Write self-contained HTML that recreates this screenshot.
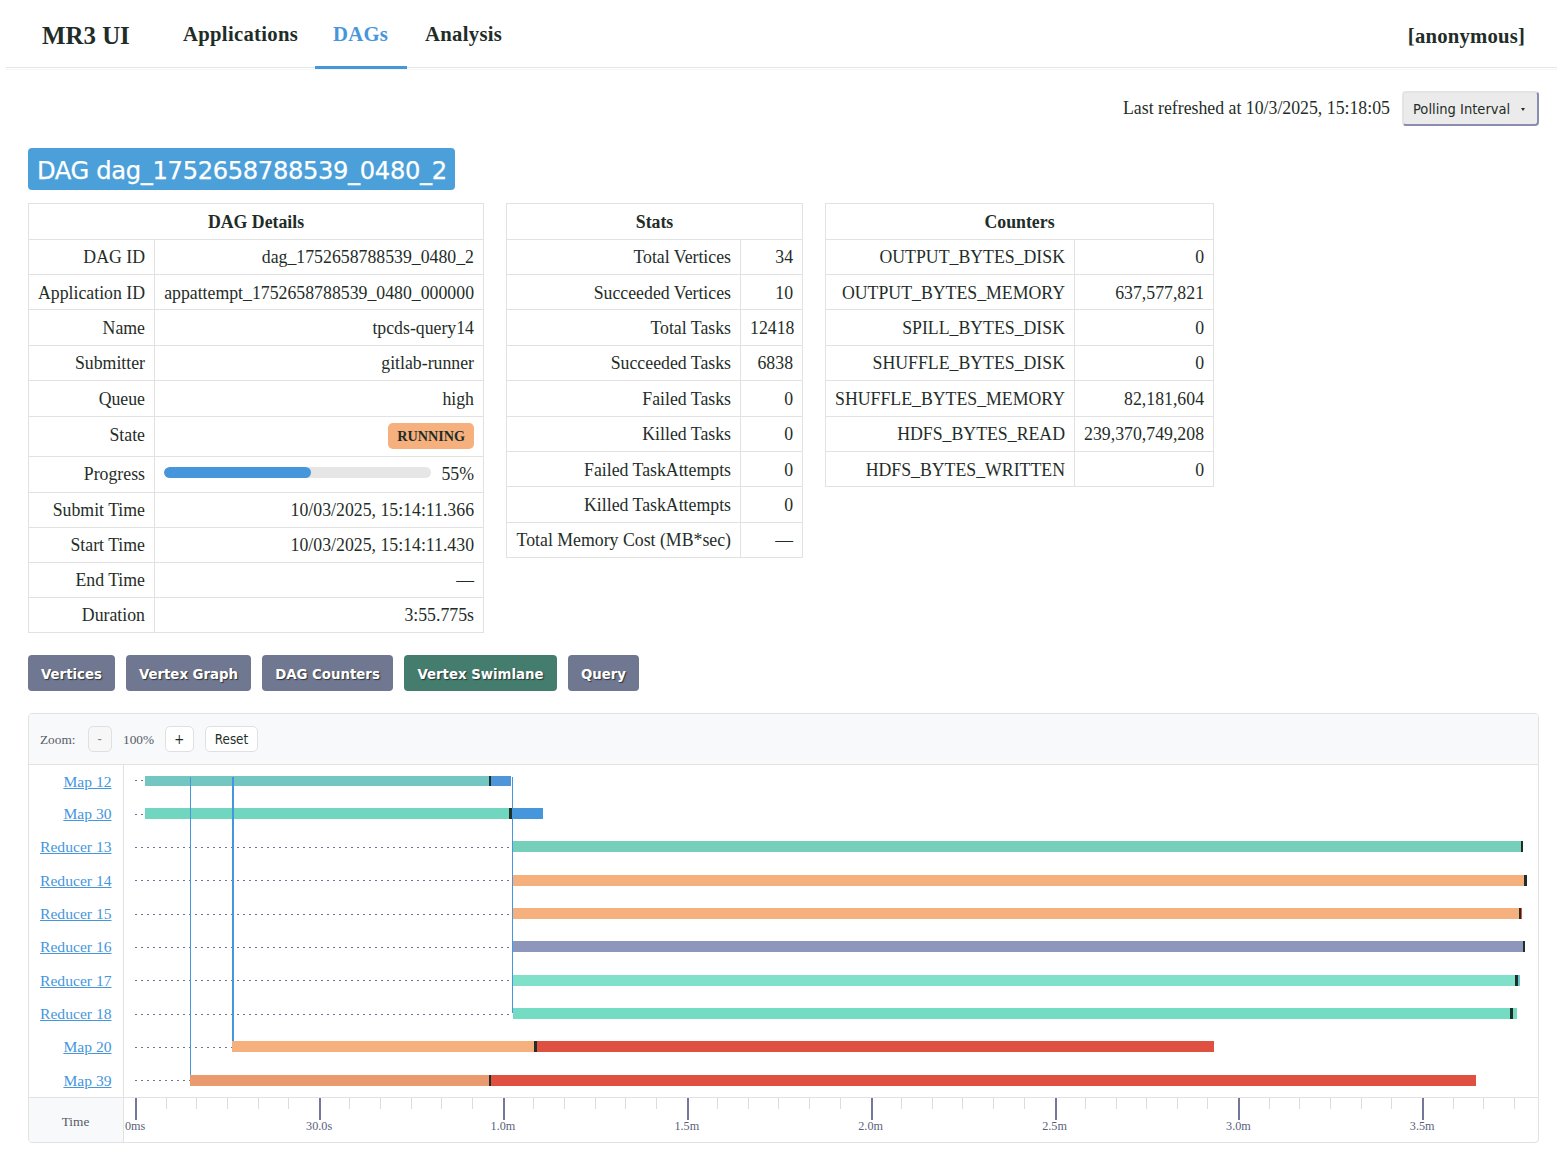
<!DOCTYPE html>
<html lang="en">
<head>
<meta charset="utf-8">
<title>MR3 UI</title>
<style>
html,body{margin:0;padding:0;background:#fff;}
body{width:1557px;height:1163px;position:relative;overflow:hidden;font-family:"Liberation Serif","Times New Roman",serif;font-size:17.78px;color:#1f2d28;}
a{color:#4696dc;}
.abs{position:absolute;}
/* header */
#hdr{left:6px;top:0;width:1551px;height:67px;border-bottom:1px solid #e3e6ea;}
#brand{left:42px;top:21.3px;font-weight:bold;font-size:24.9px;line-height:30px;white-space:nowrap;}
.nav{top:21px;font-weight:bold;font-size:20.7px;letter-spacing:0.3px;line-height:26px;white-space:nowrap;}
#hshadow{left:6px;top:69px;width:1551px;height:1px;background:#f5f6f6;}
#uline{left:315px;top:66px;width:92px;height:3px;background:#4696dc;}
/* refresh */
#refreshed{left:1123px;top:97px;line-height:22px;white-space:nowrap;}
#poll{left:1402px;top:91px;width:137px;height:35px;box-sizing:border-box;background:#ebebeb;border:2px solid;border-color:#e4e4e4 #8a8db0 #8a8db0 #e4e4e4;border-radius:4px;font-family:"DejaVu Sans Condensed","Liberation Sans",sans-serif;font-size:14.55px;line-height:32px;padding-left:9px;white-space:nowrap;}
#caret{left:1520.5px;top:108px;width:0;height:0;border-left:2.5px solid transparent;border-right:2.5px solid transparent;border-top:3px solid #1f2d28;}
/* title */
#title{left:28px;top:148px;width:427px;height:42px;box-sizing:border-box;background:#4ca0da;border-radius:4px;color:#fff;font-family:"DejaVu Sans","Liberation Sans",sans-serif;font-size:24.2px;letter-spacing:-0.35px;-webkit-text-stroke:0.25px #fff;line-height:38px;padding-top:4px;padding-left:9px;white-space:nowrap;}
/* tables */
table.kv{border-collapse:collapse;position:absolute;table-layout:fixed;}
table.kv td,table.kv th{border:1px solid #e2e2e2;height:35.35px;padding:1px 9px 0 9px;box-sizing:border-box;text-align:right;white-space:nowrap;line-height:20px;}
table.kv th{text-align:center;font-weight:bold;}
table.kv tr.state td{height:40.9px;padding-top:0;padding-bottom:3.4px;}
table.kv tr.state td+td{padding-top:2px;padding-bottom:0;}
table.kv tr.state ~ tr td{height:35.15px;padding-top:0;}
.badge{display:inline-block;background:#f5b07d;border-radius:5px;font-weight:bold;font-size:14.2px;line-height:26px;height:26px;padding:0 9px;vertical-align:middle;position:relative;top:-1px;}
.prog{display:flex;align-items:center;justify-content:flex-end;}
.track{width:268px;height:10.5px;border-radius:6px;background:#e6e6e6;margin-right:10px;overflow:hidden;position:relative;top:-2px;}
.fill{width:147px;height:10.5px;border-radius:6px;background:#4696dc;}
/* tabs */
.tab{top:655px;height:36px;background:#707791;border-radius:4px;color:#fff;font-family:"DejaVu Sans Condensed","Liberation Sans",sans-serif;font-weight:bold;font-size:14.8px;line-height:38px;text-align:center;white-space:nowrap;text-shadow:1px 1px 1px rgba(20,30,30,.75);}
.tab.on{background:#447d6e;}
/* swimlane */
#swim{position:absolute;left:28px;top:713px;width:1511px;height:430px;box-sizing:border-box;border:1px solid #e2e2e2;border-radius:4px;overflow:hidden;}
#swim>*{position:absolute;}
#swhead{left:-1px;top:-1px;width:1511px;height:51px;background:#f8f9fa;border-bottom:1px solid #e2e2e2;}
#swhead>*{position:absolute;}
.zl{top:18px;font-size:13.3px;line-height:18px;color:#565b66;}
.zb{top:12.5px;height:26px;box-sizing:border-box;border:1px solid #e0e0e0;border-radius:5px;background:#fff;font-family:"DejaVu Sans Condensed","Liberation Sans",sans-serif;font-size:13.3px;line-height:25px;text-align:center;color:#1f2d28;}
.zb.dis{background:#f7f7f7;color:#888;}
#lcol{left:-1px;top:51px;width:95px;height:380px;border-right:1px solid #e2e2e2;}
#axl{left:-1px;top:383px;width:95px;height:47px;background:#f8f9fa;border-top:1px solid #e2e2e2;border-right:1px solid #e2e2e2;text-align:center;font-size:13.3px;line-height:47px;color:#565b66;}
#axline{left:95px;top:383px;width:1415px;height:0;border-top:1px solid #e2e2e2;}
.vl{right:1426.5px;font-size:15.6px;line-height:22px;white-space:nowrap;color:#4696dc;text-decoration:underline;}
.lead{height:1px;background:repeating-linear-gradient(to right,#6e7192 0,#6e7192 2px,transparent 2px,transparent 6px);}
.bar{height:10px;}
.vc{background:#4696dc;}
.tk{top:384px;width:1px;height:11px;background:#dcdce0;}
.tk.mj{width:2px;height:22px;background:#74779a;}
.tl{top:405px;width:60px;text-align:center;font-size:12.2px;line-height:14px;color:#5b5f7c;}
</style>
</head>
<body>
<div id="hdr" class="abs"></div>
<div id="hshadow" class="abs"></div>
<div id="brand" class="abs">MR3 UI</div>
<div class="abs nav" style="left:183px">Applications</div>
<div class="abs nav" style="left:333px;color:#4696dc">DAGs</div>
<div class="abs nav" style="left:425px">Analysis</div>
<div class="abs nav" style="right:32px;top:23px;letter-spacing:0.2px">[anonymous]</div>
<div id="uline" class="abs"></div>

<div id="refreshed" class="abs">Last refreshed at 10/3/2025, 15:18:05</div>
<div id="poll" class="abs">Polling Interval</div>
<div id="caret" class="abs"></div>

<div id="title" class="abs">DAG dag_1752658788539_0480_2</div>

<table class="kv" style="left:28px;top:203.45px;width:455px">
<colgroup><col style="width:126px"><col style="width:329px"></colgroup>
<tr><th colspan="2">DAG Details</th></tr>
<tr><td>DAG ID</td><td>dag_1752658788539_0480_2</td></tr>
<tr><td>Application ID</td><td>appattempt_1752658788539_0480_000000</td></tr>
<tr><td>Name</td><td>tpcds-query14</td></tr>
<tr><td>Submitter</td><td>gitlab-runner</td></tr>
<tr><td>Queue</td><td>high</td></tr>
<tr class="state"><td>State</td><td><span class="badge">RUNNING</span></td></tr>
<tr><td>Progress</td><td><div class="prog"><div class="track"><div class="fill"></div></div><span class="pct">55%</span></div></td></tr>
<tr><td>Submit Time</td><td>10/03/2025, 15:14:11.366</td></tr>
<tr><td>Start Time</td><td>10/03/2025, 15:14:11.430</td></tr>
<tr><td>End Time</td><td>&mdash;</td></tr>
<tr><td>Duration</td><td>3:55.775s</td></tr>
</table>

<table class="kv" style="left:506px;top:203.45px;width:296px">
<colgroup><col style="width:234px"><col style="width:62px"></colgroup>
<tr><th colspan="2">Stats</th></tr>
<tr><td>Total Vertices</td><td>34</td></tr>
<tr><td>Succeeded Vertices</td><td>10</td></tr>
<tr><td>Total Tasks</td><td>12418</td></tr>
<tr><td>Succeeded Tasks</td><td>6838</td></tr>
<tr><td>Failed Tasks</td><td>0</td></tr>
<tr><td>Killed Tasks</td><td>0</td></tr>
<tr><td>Failed TaskAttempts</td><td>0</td></tr>
<tr><td>Killed TaskAttempts</td><td>0</td></tr>
<tr><td>Total Memory Cost (MB*sec)</td><td>&mdash;</td></tr>
</table>

<table class="kv" style="left:825px;top:203.45px;width:388px">
<colgroup><col style="width:249px"><col style="width:139px"></colgroup>
<tr><th colspan="2">Counters</th></tr>
<tr><td>OUTPUT_BYTES_DISK</td><td>0</td></tr>
<tr><td>OUTPUT_BYTES_MEMORY</td><td>637,577,821</td></tr>
<tr><td>SPILL_BYTES_DISK</td><td>0</td></tr>
<tr><td>SHUFFLE_BYTES_DISK</td><td>0</td></tr>
<tr><td>SHUFFLE_BYTES_MEMORY</td><td>82,181,604</td></tr>
<tr><td>HDFS_BYTES_READ</td><td>239,370,749,208</td></tr>
<tr><td>HDFS_BYTES_WRITTEN</td><td>0</td></tr>
</table>

<div class="abs tab" style="left:28px;width:87px">Vertices</div>
<div class="abs tab" style="left:126px;width:125px">Vertex Graph</div>
<div class="abs tab" style="left:262px;width:131px">DAG Counters</div>
<div class="abs tab on" style="left:404px;width:153px">Vertex Swimlane</div>
<div class="abs tab" style="left:568px;width:71px">Query</div>

<div id="swim">
<div id="swhead"><span class="zl" style="left:12px">Zoom:</span><span class="zb dis" style="left:60px;width:23.5px">-</span><span class="zl" style="left:95px">100%</span><span class="zb" style="left:137px;width:28.5px">+</span><span class="zb" style="left:177px;width:53px">Reset</span></div>
<div id="lcol"></div>
<div id="axl">Time</div>
<div id="axline"></div>
<a class="vl" href="#" style="top:56.7px">Map 12</a>
<div class="lead" style="top:66px;left:106px;width:10.0px"></div>
<div class="bar" style="top:62px;height:10px;left:116.0px;width:344.0px;background:#74c6c2"></div>
<div class="bar" style="top:62px;height:10px;left:460.0px;width:2.0px;background:#1f3028"></div>
<div class="bar" style="top:62px;height:10px;left:462.0px;width:20.0px;background:#4f96d8"></div>
<a class="vl" href="#" style="top:89.2px">Map 30</a>
<div class="lead" style="top:100px;left:106px;width:10.0px"></div>
<div class="bar" style="top:94px;height:11px;left:116.0px;width:364.0px;background:#70d6bf"></div>
<div class="bar" style="top:94px;height:11px;left:480.0px;width:3.0px;background:#1f3028"></div>
<div class="bar" style="top:94px;height:11px;left:483.0px;width:31.0px;background:#4696dc"></div>
<a class="vl" href="#" style="top:122.2px">Reducer 13</a>
<div class="lead" style="top:133px;left:106px;width:378.0px"></div>
<div class="bar" style="top:127px;height:11px;left:484.0px;width:1008.2px;background:#76cfbb"></div>
<div class="bar" style="top:127px;height:11px;left:1492.2px;width:1.8px;background:#1f3028"></div>
<a class="vl" href="#" style="top:156.2px">Reducer 14</a>
<div class="lead" style="top:166px;left:106px;width:378.0px"></div>
<div class="bar" style="top:161px;height:11px;left:484.0px;width:1010.5px;background:#f5b07d"></div>
<div class="bar" style="top:161px;height:11px;left:1494.5px;width:3.5px;background:#1f3028"></div>
<a class="vl" href="#" style="top:189.2px">Reducer 15</a>
<div class="lead" style="top:200px;left:106px;width:378.0px"></div>
<div class="bar" style="top:194px;height:11px;left:484.0px;width:1006.0px;background:#f5b07d"></div>
<div class="bar" style="top:194px;height:11px;left:1490.0px;width:1.5px;background:#1f3028"></div>
<div class="bar" style="top:194px;height:11px;left:1491.5px;width:1.3px;background:#e05040"></div>
<a class="vl" href="#" style="top:222.2px">Reducer 16</a>
<div class="lead" style="top:233px;left:106px;width:378.0px"></div>
<div class="bar" style="top:227px;height:11px;left:484.0px;width:1009.6px;background:#8e97bb"></div>
<div class="bar" style="top:227px;height:11px;left:1493.6px;width:2.1px;background:#1f3028"></div>
<a class="vl" href="#" style="top:255.9px">Reducer 17</a>
<div class="lead" style="top:266px;left:106px;width:378.0px"></div>
<div class="bar" style="top:261px;height:10.5px;left:484.0px;width:1001.7px;background:#80e0ca"></div>
<div class="bar" style="top:261px;height:10.5px;left:1485.7px;width:3.3px;background:#1f3028"></div>
<div class="bar" style="top:261px;height:10.5px;left:1489.0px;width:2.0px;background:#6cc6d0"></div>
<a class="vl" href="#" style="top:289.2px">Reducer 18</a>
<div class="lead" style="top:300px;left:106px;width:378.0px"></div>
<div class="bar" style="top:294px;height:11px;left:484.0px;width:996.7px;background:#73dcc3"></div>
<div class="bar" style="top:294px;height:11px;left:1480.7px;width:3.3px;background:#1f3028"></div>
<div class="bar" style="top:294px;height:11px;left:1484.0px;width:3.8px;background:#73dcc3"></div>
<a class="vl" href="#" style="top:321.9px">Map 20</a>
<div class="lead" style="top:333px;left:106px;width:97.0px"></div>
<div class="bar" style="top:327px;height:10.5px;left:203.0px;width:302.0px;background:#f5b07d"></div>
<div class="bar" style="top:327px;height:10.5px;left:505.0px;width:2.5px;background:#1f3028"></div>
<div class="bar" style="top:327px;height:10.5px;left:507.5px;width:677.5px;background:#e05040"></div>
<a class="vl" href="#" style="top:356.0px">Map 39</a>
<div class="lead" style="top:366px;left:106px;width:55.0px"></div>
<div class="bar" style="top:361px;height:10.7px;left:161.0px;width:299.0px;background:#ea9a6e"></div>
<div class="bar" style="top:361px;height:10.7px;left:460.0px;width:2.0px;background:#1f3028"></div>
<div class="bar" style="top:361px;height:10.7px;left:462.0px;width:985.0px;background:#e05040"></div>
<div class="vc" style="left:161px;top:63px;width:1px;height:298px"></div>
<div class="vc" style="left:203px;top:63px;width:2px;height:264px"></div>
<div class="vc" style="left:483px;top:63px;width:1px;height:236px"></div>
<div class="tk mj" style="left:106.2px"></div>
<div class="tl" style="left:76.2px">0ms</div>
<div class="tk" style="left:136.5px"></div>
<div class="tk" style="left:167.2px"></div>
<div class="tk" style="left:197.8px"></div>
<div class="tk" style="left:228.5px"></div>
<div class="tk" style="left:259.1px"></div>
<div class="tk mj" style="left:290.1px"></div>
<div class="tl" style="left:260.1px">30.0s</div>
<div class="tk" style="left:320.4px"></div>
<div class="tk" style="left:351.0px"></div>
<div class="tk" style="left:381.7px"></div>
<div class="tk" style="left:412.3px"></div>
<div class="tk" style="left:443.0px"></div>
<div class="tk mj" style="left:473.9px"></div>
<div class="tl" style="left:443.9px">1.0m</div>
<div class="tk" style="left:504.3px"></div>
<div class="tk" style="left:534.9px"></div>
<div class="tk" style="left:565.6px"></div>
<div class="tk" style="left:596.2px"></div>
<div class="tk" style="left:626.8px"></div>
<div class="tk mj" style="left:657.8px"></div>
<div class="tl" style="left:627.8px">1.5m</div>
<div class="tk" style="left:688.1px"></div>
<div class="tk" style="left:718.8px"></div>
<div class="tk" style="left:749.4px"></div>
<div class="tk" style="left:780.1px"></div>
<div class="tk" style="left:810.7px"></div>
<div class="tk mj" style="left:841.6px"></div>
<div class="tl" style="left:811.6px">2.0m</div>
<div class="tk" style="left:872.0px"></div>
<div class="tk" style="left:902.6px"></div>
<div class="tk" style="left:933.3px"></div>
<div class="tk" style="left:963.9px"></div>
<div class="tk" style="left:994.6px"></div>
<div class="tk mj" style="left:1025.5px"></div>
<div class="tl" style="left:995.5px">2.5m</div>
<div class="tk" style="left:1055.8px"></div>
<div class="tk" style="left:1086.5px"></div>
<div class="tk" style="left:1117.1px"></div>
<div class="tk" style="left:1147.8px"></div>
<div class="tk" style="left:1178.4px"></div>
<div class="tk mj" style="left:1209.4px"></div>
<div class="tl" style="left:1179.4px">3.0m</div>
<div class="tk" style="left:1239.7px"></div>
<div class="tk" style="left:1270.4px"></div>
<div class="tk" style="left:1301.0px"></div>
<div class="tk" style="left:1331.6px"></div>
<div class="tk" style="left:1362.3px"></div>
<div class="tk mj" style="left:1393.2px"></div>
<div class="tl" style="left:1363.2px">3.5m</div>
<div class="tk" style="left:1423.6px"></div>
<div class="tk" style="left:1454.2px"></div>
<div class="tk" style="left:1484.9px"></div>
</div>
</body>
</html>
